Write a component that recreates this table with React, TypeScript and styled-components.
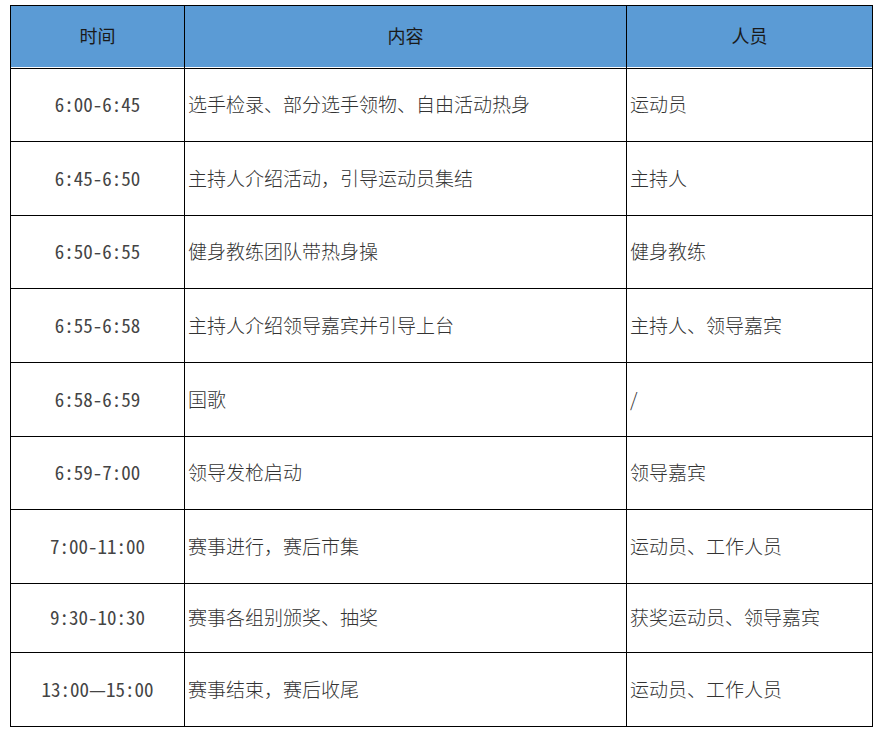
import styled, { createGlobalStyle } from "styled-components";

const GlobalStyle = createGlobalStyle`
  html, body {
    margin: 0;
    padding: 0;
    background: #ffffff;
  }
  body {
    font-family: "Noto Sans CJK SC", "Noto Sans", sans-serif;
  }
`;

type Row = {
  time: string;
  content: string;
  people: string;
  height: number;
};

const rows: Row[] = [
  { time: "6:00-6:45", content: "选手检录、部分选手领物、自由活动热身", people: "运动员", height: 73 },
  { time: "6:45-6:50", content: "主持人介绍活动，引导运动员集结", people: "主持人", height: 74 },
  { time: "6:50-6:55", content: "健身教练团队带热身操", people: "健身教练", height: 73 },
  { time: "6:55-6:58", content: "主持人介绍领导嘉宾并引导上台", people: "主持人、领导嘉宾", height: 74 },
  { time: "6:58-6:59", content: "国歌", people: "/", height: 74 },
  { time: "6:59-7:00", content: "领导发枪启动", people: "领导嘉宾", height: 73 },
  { time: "7:00-11:00", content: "赛事进行，赛后市集", people: "运动员、工作人员", height: 74 },
  { time: "9:30-10:30", content: "赛事各组别颁奖、抽奖", people: "获奖运动员、领导嘉宾", height: 69 },
  { time: "13:00—15:00", content: "赛事结束，赛后收尾", people: "运动员、工作人员", height: 74 },
];

const HEADER_HEIGHT = 63;

export default function App() {
  return (
    <>
      <GlobalStyle />
      <Page>
        <Schedule
          role="table"
          style={{
            gridTemplateRows: [HEADER_HEIGHT, ...rows.map((r) => r.height)]
              .map((h) => `${h}px`)
              .join(" "),
          }}
        >
          <HeadCell role="columnheader">时间</HeadCell>
          <HeadCell role="columnheader">内容</HeadCell>
          <HeadCell role="columnheader">人员</HeadCell>
          {rows.map((row) => (
            <RowGroup key={row.time} role="row">
              <TimeCell role="cell">{row.time}</TimeCell>
              <TextCell role="cell">{row.content}</TextCell>
              <TextCell role="cell">{row.people}</TextCell>
            </RowGroup>
          ))}
        </Schedule>
      </Page>
    </>
  );
}

const Page = styled.div`
  padding: 5px 0 0 10px;
`;

const Schedule = styled.div`
  display: grid;
  grid-template-columns: 174px 442px 246px;
  width: max-content;
  border-top: 1px solid #000;
  border-left: 1px solid #000;
`;

const RowGroup = styled.div`
  display: contents;
`;

const Cell = styled.div`
  box-sizing: border-box;
  display: flex;
  align-items: center;
  border-right: 1px solid #000;
  border-bottom: 1px solid #000;
  font-size: 19px;
  line-height: 1;
  white-space: nowrap;
  overflow: hidden;
  padding-bottom: 3px;
`;

const HeadCell = styled(Cell)`
  justify-content: center;
  background: #5b9bd5;
  color: #1a1a1a;
  font-size: 18px;
  box-shadow: inset 0 -1px 0 #ffffff;
  padding-bottom: 4px;
`;

const TimeCell = styled(Cell)`
  justify-content: center;
  color: #444;
  font-family: "Noto Sans Mono CJK SC", "Liberation Mono", monospace;
  font-weight: 400;
`;

const TextCell = styled(Cell)`
  justify-content: flex-start;
  padding-left: 3px;
  color: #333;
  font-family: "Noto Sans CJK SC", sans-serif;
  font-weight: 300;
`;
